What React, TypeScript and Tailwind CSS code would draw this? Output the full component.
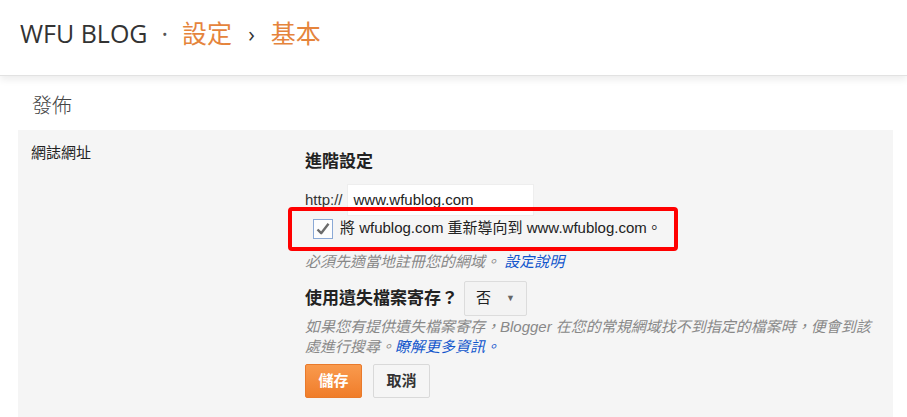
import React from 'react';

const bodyFont = 'font-["Liberation_Sans","Noto_Sans_CJK_TC",sans-serif]';

function CheckIcon() {
  return (
    <svg viewBox="0 0 20 20" className="w-[20px] h-[20px]">
      <rect x="0.5" y="0.5" width="19" height="19" fill="#fdfdfd" stroke="#8aa9d6" />
      <path d="M4.5 10.5 L8.2 14.2 L15.5 4.8" fill="none" stroke="#6b6b6b" strokeWidth="2.4" strokeLinejoin="round" />
    </svg>
  );
}

export default function App() {
  return (
    <div className={`w-[907px] h-[417px] overflow-hidden bg-white text-[#222] ${bodyFont}`}>
      {/* Top bar */}
      <header className="h-[76px] border-b border-[#e2e2e2] shadow-[0_4px_7px_rgba(0,0,0,0.07)] flex items-center pl-[20px] pb-[8px] font-['Open_Sans','Noto_Sans_CJK_TC',sans-serif] text-[25px]">
        <span className="text-[#333]">WFU BLOG</span>
        <span className="text-[#555] mx-[14px]">·</span>
        <span className="text-[#e5843c]">設定</span>
        <span className="text-[#333] mx-[16px] text-[22px]">›</span>
        <span className="text-[#e5843c]">基本</span>
      </header>

      <h2 className="mt-[15px] ml-[32px] text-[20px] leading-[28px] text-[#444] font-['Noto_Sans_CJK_TC',sans-serif] font-light">發佈</h2>

      {/* Settings panel */}
      <section className="mt-[11px] ml-[18px] w-[875px] h-[300px] bg-[#f5f5f5] flex pt-[13px] pl-[13px]">
        <div className="w-[274px] text-[15px] leading-[20px] text-[#222]">網誌網址</div>

        <div className="flex flex-col pt-[8px]">
          <h3 className="text-[17px] leading-[22px] font-bold text-[#222]">進階設定</h3>

          <div className="mt-[11px] flex items-center">
            <span className="text-[15px] text-[#333]">http://</span>
            <div className="ml-[4px] w-[187px] h-[32px] bg-white border border-[#eeeeee] flex items-center pl-[6px] text-[15px] text-[#222]">
              www.wfublog.com
            </div>
          </div>

          <div className="relative mt-[1px] h-[23px] flex items-center pl-[8px]">
            <span className="absolute -left-[17px] -top-[10px] w-[390px] h-[44px] border-[4px] border-[#ff0000] rounded-[4px]" />
            <CheckIcon />
            <span className="ml-[7px] text-[15px] text-[#222]">將 wfublog.com 重新導向到 www.wfublog.com。</span>
          </div>

          <p className="mt-[12px] text-[15px] leading-[20px] italic text-[#888]">
            必須先適當地註冊您的網域。 <span className="text-[#1155cc]">設定說明</span>
          </p>

          <div className="mt-[9px] flex items-center">
            <span className="text-[17px] font-bold text-[#222]">使用遺失檔案寄存？</span>
            <div className="ml-[6px] w-[63px] h-[35px] bg-[#f3f3f3] border border-[#dcdcdc] rounded-[2px] flex items-center justify-between px-[11px] text-[15px] text-[#222]">
              <span>否</span>
              <span className="text-[9px] text-[#666]">▼</span>
            </div>
          </div>

          <p className="mt-[1px] w-[580px] text-[15px] leading-[20px] italic text-[#888]">
            如果您有提供遺失檔案寄存，Blogger 在您的常規網域找不到指定的檔案時，便會到該<br />
            處進行搜尋。<span className="text-[#1155cc]">瞭解更多資訊。</span>
          </p>

          <div className="mt-[7px] flex gap-[11px]">
            <button className="w-[57px] h-[34px] rounded-[2px] bg-gradient-to-b from-[#f99a4d] to-[#f07d29] border border-[#e97a2b] text-white text-[15px] font-bold">
              儲存
            </button>
            <button className="w-[57px] h-[34px] rounded-[2px] bg-[#f5f5f5] border border-[#d9d9d9] text-[#333] text-[15px] font-bold">
              取消
            </button>
          </div>
        </div>
      </section>
    </div>
  );
}
